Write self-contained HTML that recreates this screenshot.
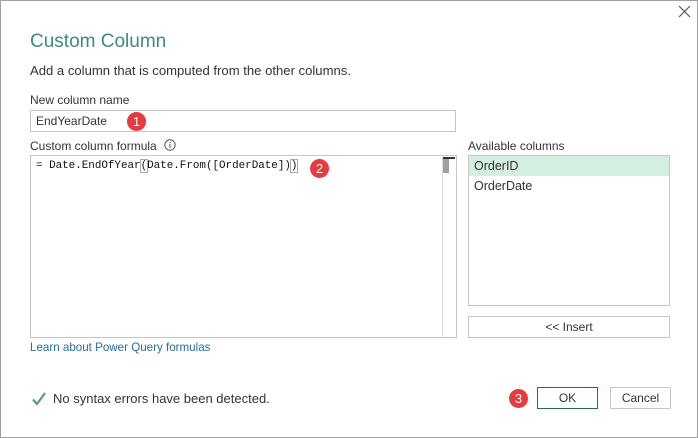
<!DOCTYPE html>
<html><head><meta charset="utf-8"><style>
*{box-sizing:border-box;margin:0;padding:0}
body{width:698px;height:438px;background:#fff;font-family:"Liberation Sans",sans-serif;color:#333;position:relative;overflow:hidden}
.frame{position:absolute;left:0;top:0;width:698px;height:438px;border:1px solid #a0a0a0}
.a{position:absolute;white-space:nowrap}
.badge{position:absolute;width:19px;height:19px;border-radius:50%;background:#e63a3f;color:#fff;font-size:13px;text-align:center;line-height:19px}
.box{position:absolute;border:1px solid #c6c6c6;background:#fff}
.btn{position:absolute;border:1px solid #c6c6c6;background:#fff;font-size:12px;text-align:center;color:#333}
</style></head><body>
<div class="frame"></div>
<svg class="a" style="left:678px;top:5px" width="13" height="13"><path d="M1 1L12 12M12 1L1 12" stroke="#555" stroke-width="1.2"/></svg>
<div class="a" style="left:30px;top:31px;font-size:19px;color:#3e8a80">Custom Column</div>
<div class="a" style="left:30px;top:63px;font-size:13.1px">Add a column that is computed from the other columns.</div>
<div class="a" style="left:30px;top:93px;font-size:12px">New column name</div>
<div class="box" style="left:30px;top:110px;width:426px;height:22px"></div>
<div class="a" style="left:36px;top:114px;font-size:12px">EndYearDate</div>
<div class="badge" style="left:127px;top:112px">1</div>
<div class="a" style="left:30px;top:139px;font-size:12px">Custom column formula</div>
<svg class="a" style="left:164px;top:139px" width="12" height="12"><circle cx="6" cy="6" r="5.2" fill="none" stroke="#555" stroke-width="1"/><path d="M6 5v4M6 3v1" stroke="#555" stroke-width="1"/></svg>
<div class="box" style="left:30px;top:155px;width:427px;height:183px"></div>
<div class="a" style="left:442px;top:156px;width:1px;height:181px;background:#ddd"></div>
<div class="a" style="left:443px;top:157px;width:12px;height:2px;background:#333"></div>
<div class="a" style="left:443px;top:159px;width:6px;height:14px;background:#a0a0a0"></div>
<div class="a" style="left:36px;top:160px;font-family:'Liberation Mono',monospace;font-size:10.9px;color:#111">= Date.EndOfYear<span style="outline:1px solid #aaa">(</span>Date.From([OrderDate])<span style="outline:1px solid #aaa">)</span></div>
<div class="badge" style="left:310px;top:159px">2</div>
<div class="a" style="left:468px;top:139px;font-size:12px">Available columns</div>
<div class="box" style="left:468px;top:155px;width:202px;height:151px"></div>
<div class="a" style="left:469px;top:156px;width:200px;height:20px;background:#d4eee0"></div>
<div class="a" style="left:474px;top:159px;font-size:12.5px">OrderID</div>
<div class="a" style="left:474px;top:179px;font-size:12.5px">OrderDate</div>
<div class="btn" style="left:468px;top:316px;width:202px;height:22px;line-height:20px">&lt;&lt; Insert</div>
<div class="a" style="left:30px;top:341px;font-size:11.6px;color:#2b6c9a">Learn about Power Query formulas</div>
<svg class="a" style="left:31px;top:391px" width="16" height="16"><path d="M2 8.5L6 13L14 2" fill="none" stroke="#5b9a7c" stroke-width="2.2"/></svg>
<div class="a" style="left:53px;top:391px;font-size:13px">No syntax errors have been detected.</div>
<div class="badge" style="left:509px;top:389px">3</div>
<div class="btn" style="left:537px;top:387px;width:61px;height:22px;line-height:20px;border-color:#217346">OK</div>
<div class="btn" style="left:610px;top:387px;width:61px;height:22px;line-height:20px">Cancel</div>
</body></html>
